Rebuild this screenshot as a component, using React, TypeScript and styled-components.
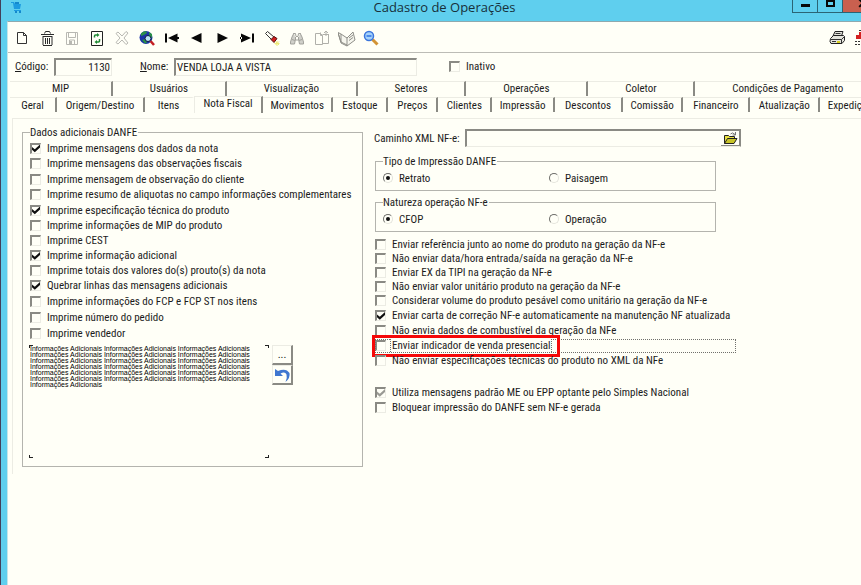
import React from "react";
import styled, { createGlobalStyle, css } from "styled-components";

const paper = "#fffff7";
const sky = "#5fcfee";
const shade = "#8a8a84";
const soft = "#b4b4ae";
const faint = "#ececE4";
const ink = "#1c1c1c";

const GlobalStyle = createGlobalStyle`
  * { box-sizing: border-box; }
  body {
    margin: 0;
    overflow: hidden;
    background: ${paper};
    color: ${ink};
    font: 11px/13px "Roboto Condensed", "Liberation Sans", Roboto, sans-serif;
  }
  button, input, textarea { font: inherit; color: inherit; margin: 0; }
`;

const Window = styled.div`
  width: calc(100% + 27px);
  min-height: 100vh;
  display: flex;
  flex-direction: column;
  background: ${sky};
  border-left: 1px solid #43405a;
  padding-left: 6px;
`;

const TitleBar = styled.header`
  height: 21px;
  display: grid;
  grid-template-columns: 1fr auto 1fr;
  align-items: start;
  padding-right: 6px;
`;

const AppIcon = styled.svg`
  width: 14px;
  height: 14px;
  margin-left: 2px;
`;

const Title = styled.h1`
  margin: 0;
  font: 400 13px/15px "Open Sans", "Noto Sans", sans-serif;
  color: #17303a;
`;

const WindowButtons = styled.div`
  display: flex;
  justify-content: flex-end;
`;

const WindowButton = styled.button<{ $close?: boolean }>`
  width: ${(p) => (p.$close ? 40 : 25)}px;
  height: 13px;
  padding: 0;
  display: flex;
  justify-content: center;
  border: 1px solid #2b6475;
  border-top: 0;
  border-right-width: ${(p) => (p.$close ? 1 : 0)}px;
  background: ${(p) => (p.$close ? "#c9604f" : sky)};
  svg { width: 100%; height: 12px; }
`;

const Client = styled.main`
  flex: 1;
  background: ${paper};
  border-top: 1px solid #8fa9ae;
  border-left: 1px solid #c4e6ea;
`;

const Toolbar = styled.div`
  height: 31px;
  display: flex;
  align-items: center;
  padding: 2px 14px 0 1px;
  border-bottom: 1px solid #bcbcb6;
`;

const ToolButton = styled.button<{ $end?: boolean }>`
  width: 25px;
  height: 24px;
  padding: 0;
  display: flex;
  align-items: center;
  justify-content: center;
  border: 0;
  background: none;
  ${(p) => p.$end && css`margin-left: auto;`}
  svg { width: 18px; height: 18px; }
`;

const IdentityRow = styled.form`
  height: 27px;
  display: flex;
  align-items: center;
  padding-left: 7px;
`;

const FieldLabel = styled.label<{ $width: number; $gap?: number }>`
  width: ${(p) => p.$width}px;
  margin-left: ${(p) => p.$gap ?? 0}px;
  white-space: nowrap;
`;

const TextField = styled.input<{ $width?: number; $right?: boolean }>`
  ${(p) => (p.$width ? css`width: ${p.$width}px;` : css`flex: 1; min-width: 0;`)}
  height: 18px;
  padding: 0 1px;
  border: 1px solid ${faint};
  border-top: 2px solid ${shade};
  border-left: 2px solid ${shade};
  border-radius: 0;
  background: ${paper};
  outline: 0;
  text-align: ${(p) => (p.$right ? "right" : "left")};
`;

const TabRow = styled.div<{ $front?: boolean }>`
  display: flex;
  align-items: center;
  height: ${(p) => (p.$front ? 17 : 16)}px;
  margin: 0 6px 0 2px;
`;

const Tab = styled.button<{ $selected?: boolean; $min?: number; $before?: boolean }>`
  flex: 1 1 auto;
  min-width: ${(p) => p.$min ?? 0}px;
  height: 15px;
  padding: 0 5px;
  border: 0;
  border-top: 1px solid ${faint};
  border-right: 2px solid ${(p) => (p.$before ? "transparent" : shade)};
  background: ${paper};
  text-align: center;
  white-space: nowrap;
  line-height: 13px;
  ${(p) => p.$selected && css`
    height: 17px;
    padding-bottom: 3px;
    border-left: 1px solid ${faint};
  `}
`;

const Panel = styled.section`
  margin: 5px 6px 0 4px;
  padding: 7px 9px;
  border-top: 1px solid ${faint};
  border-left: 1px solid ${faint};
  display: grid;
  grid-template-columns: minmax(0, 341px) minmax(0, 367px);
  column-gap: 11px;
  align-items: start;
`;

const Group = styled.fieldset<{ $roomy?: boolean }>`
  min-width: 0;
  margin: 0;
  padding: ${(p) => (p.$roomy ? "1px 7px 8px" : "0 7px 2px")};
  border: 1px solid ${soft};
`;

const Legend = styled.legend`
  height: 13px;
  padding: 0 1px 0 0;
`;

const Column = styled.div`
  padding-top: 3px;
  display: flex;
  flex-direction: column;
`;

const Choices = styled.div`
  margin: 0 25px 0 1px;
  display: grid;
  gap: 5px;
  padding: 8px 0 5px;
`;

const RadioRow = styled.div`
  height: 20px;
  display: grid;
  grid-template-columns: 166px 1fr;
  align-items: center;
`;

const OptionList = styled.div<{ $apart?: boolean }>`
  padding-left: 1px;
  padding-top: ${(p) => (p.$apart ? 17 : 0)}px;
`;

const Option = styled.label<{ $height?: number }>`
  position: relative;
  width: fit-content;
  height: ${(p) => p.$height ?? 15}px;
  display: flex;
  align-items: center;
  gap: 6px;
  white-space: nowrap;
`;

const Tick = styled.input.attrs({ type: "checkbox" })`
  appearance: none;
  flex: none;
  width: 11px;
  height: 11px;
  border: 1px solid ${faint};
  border-top: 2px solid ${shade};
  border-left: 2px solid ${shade};
  background: ${paper};
  outline: 0;
  &:checked::after {
    content: "";
    display: block;
    width: 8px;
    height: 8px;
    background: #101010;
    clip-path: polygon(0 30%, 35% 60%, 100% 0, 100% 36%, 35% 96%, 0 66%);
  }
  &:disabled::after { background: #9a9a94; }
`;

const Radio = styled.input.attrs({ type: "radio" })`
  appearance: none;
  flex: none;
  width: 10px;
  height: 10px;
  display: grid;
  place-items: center;
  border: 1px solid #e4e4dc;
  border-top-color: #6e6e6a;
  border-left-color: #6e6e6a;
  border-radius: 50%;
  background: ${paper};
  &:checked::after {
    content: "";
    width: 4px;
    height: 4px;
    border-radius: 50%;
    background: #101010;
  }
`;

const FocusOption = styled(Option)`
  width: 361px;
  &::before {
    content: "";
    position: absolute;
    inset: 1px 0 0 0;
    border: 1px dotted #70706c;
  }
`;

const FocusText = styled.span`
  position: relative;
  margin-left: -2px;
  padding: 0 1px;
  border: 1px dotted #70706c;
  border-width: 0 1px;
  background: ${paper};
`;

const RedMark = styled.span`
  position: absolute;
  inset: -3px auto -4px -3px;
  width: 188px;
  border: 3px solid #f50808;
  pointer-events: none;
`;

const Memo = styled.div`
  margin-top: 4px;
  display: flex;
  gap: 3px;
`;

const MemoBox = styled.div`
  position: relative;
  flex: 0 1 239px;
  height: 113px;
`;

const MemoText = styled.textarea`
  display: block;
  width: 100%;
  height: 100%;
  padding: 1px 0 0;
  border: 0;
  resize: none;
  outline: 0;
  overflow: hidden;
  background: transparent;
  color: #000;
  font: 7px/6px "Liberation Sans", sans-serif;
`;

const Corner = styled.i<{ $right?: boolean; $bottom?: boolean }>`
  position: absolute;
  width: 4px;
  height: 3px;
  ${(p) => (p.$right ? "right: 0" : "left: -1px")};
  ${(p) => (p.$bottom ? "bottom: 0" : "top: 0")};
  border: 0 solid #222;
  border-${(p) => (p.$right ? "right" : "left")}-width: 1px;
  border-${(p) => (p.$bottom ? "bottom" : "top")}-width: 1px;
`;

const MemoButtons = styled.div`
  display: flex;
  flex-direction: column;
`;

const RaisedButton = styled.button`
  width: 21px;
  height: 20px;
  padding: 0;
  display: grid;
  place-items: center;
  border: 1px solid ${faint};
  border-right: 2px solid ${shade};
  border-bottom: 2px solid ${shade};
  background: ${paper};
  svg { width: 17px; height: 16px; }
`;

const PathRow = styled.div`
  height: 18px;
  display: flex;
  align-items: center;
`;

const PathBox = styled.div`
  flex: 1;
  display: flex;
  height: 18px;
  border: 1px solid ${faint};
  border-top: 2px solid ${shade};
  border-left: 2px solid ${shade};
  border-right: 1px solid ${shade};
`;

const PathInput = styled.input`
  flex: 1;
  min-width: 0;
  padding: 0 2px;
  border: 0;
  outline: 0;
  background: transparent;
`;

const FolderButton = styled.button`
  width: 19px;
  padding: 0;
  display: grid;
  place-items: center;
  border: 0;
  border-right: 1px solid ${shade};
  border-bottom: 1px solid ${shade};
  background: ${paper};
  svg { width: 15px; height: 14px; }
`;

const Svg = ({ children, box = "0 0 18 18" }: { children: React.ReactNode; box?: string }) => (
  <svg viewBox={box} fill="none" aria-hidden="true">{children}</svg>
);

const gray = "#b8b8b2";

const tools: { name: string; icon: React.ReactNode }[] = [
  { name: "Novo", icon: <path d="M4.5 3.500h6l3 3v8h-9zM10.500 3.500v3h3" stroke="#333" /> },
  {
    name: "Excluir",
    icon: (
      <g stroke="#2c2c2c">
        <path d="M3 5.500h13M6.500 4.500l1-2h4l1 2M4.500 7.500h10" />
        <path d="M5 8v8M14 8v8M5 16.500h9M7.500 9v6M9.500 9v6M11.500 9v6" />
      </g>
    ),
  },
  {
    name: "Salvar",
    icon: (
      <g stroke={gray}>
        <path d="M3.500 3.500h11v12h-11z" />
        <path d="M5.500 3.500v5h7v-5M6.500 15v-4h5v4" />
        <path d="M8 12v3" strokeWidth="2" />
      </g>
    ),
  },
  {
    name: "Atualizar",
    icon: (
      <g>
        <path d="M3.500 2.500h11v14h-11z" stroke="#222" />
        <path d="M6.500 8.500V7q0-1 1-1H9M11.500 10v2q0 1-1 1H9" stroke="#1e8a34" strokeWidth="1.500" />
        <path d="M9 4 11.500 6 9 8zM9 11 6.500 13 9 15z" fill="#1e8a34" />
      </g>
    ),
  },
  {
    name: "Cancelar",
    icon: (
      <path
        d="m3 4.500 2-1.500 4 4 4-4.500 2 1.500-4 5 4 5-2 1.500-4-4.500-4 4-2-1.500 4-4.500z"
        stroke={gray}
      />
    ),
  },
  {
    name: "Localizar",
    icon: (
      <g>
        <circle cx="8" cy="8.500" r="6.500" fill="#1a34a8" />
        <path d="M3 4.500q2-2.500 5-2.500l1 2-3 2-3 1zM11 3l3 2v4l-3-2zM4 11l3-1 2 4-2 .5z" fill="#2a9048" />
        <circle cx="10" cy="9.500" r="3" fill="#b8e4f4" stroke="#0b1744" />
        <path d="m12.500 12 3.500 4" stroke="#c41f24" strokeWidth="2.500" />
      </g>
    ),
  },
  { name: "Primeiro", icon: <path d="M2 4.500h2v9H2zM14.500 4.500v9L5 9z M14 8h2v2h-2z" fill="#080808" /> },
  { name: "Anterior", icon: <path d="M13.500 4v10L3 9z" fill="#080808" /> },
  { name: "Próximo", icon: <path d="M4.500 4v10L15 9z" fill="#080808" /> },
  { name: "Último", icon: <path d="M14 4.500h2v9h-2zM3 4.500v9L13 9zM2 8h2v2H2z" fill="#080808" /> },
  {
    name: "Filtrar",
    icon: (
      <g>
        <path d="m2.500 4.500 2-2L11 8 9 11z" fill={paper} stroke="#333" />
        <path d="M8 10.500 11 7.500l3 2-3 4z" fill="#d11f1f" stroke="#5a1111" />
        <path d="M14 12v5M11.500 14.500h5M12.500 12.500l3.500 3.500M16 12.500 12.500 16" stroke="#ecea76" />
      </g>
    ),
  },
  {
    name: "Procurar",
    icon: (
      <g stroke="#a2a29c">
        <path d="M6 4 4 8l-1.500 5v2h4l1-5M12 4l2 4 1.500 5v2h-4l-1-5" fill="#d0d0ca" />
        <path d="M5.500 4.500h2l.5 3h2l.5-3h2M7.500 8v3h3V8M4 10.500l3 1M11 11.500l3-1" />
      </g>
    ),
  },
  {
    name: "Copiar",
    icon: (
      <g stroke="#b0b0aa">
        <path d="M2.500 4.500h5l2 2v9h-7z" />
        <path d="M9.500 5.500h6v9h-6M7.500 3.500v3h2M11 4l2-2 2 2M13 2v5M11 5.500h5" />
      </g>
    ),
  },
  {
    name: "Manual",
    icon: (
      <g stroke="#8e8e88">
        <path d="M0 3.500 3 5l6 4 6-6 2 8-8 6-6-3z" fill="#f6f6ee" />
        <path d="m0 4 3 9M9 9v8M11 9l4-3M11 11.500l4-3M3 5v8l6 3" />
      </g>
    ),
  },
  {
    name: "Consultar",
    icon: (
      <g>
        <path d="m9.500 10.500 5 5" stroke="#d29335" strokeWidth="3" />
        <circle cx="6" cy="7" r="4.500" fill="#a5d2fb" stroke="#3b75dc" strokeWidth="1.500" />
        <path d="M3.500 7h5" stroke="#4d8bea" strokeWidth="2" />
      </g>
    ),
  },
];

const backTabs = ["MIP", "Usuários", "Visualização", "Setores", "Operações", "Coletor", "Condições de Pagamento"];
const frontTabs: [string, number][] = [
  ["Geral", 47], ["Origem/Destino", 88], ["Itens", 49], ["Nota Fiscal", 69], ["Movimentos", 70],
  ["Estoque", 55], ["Preços", 50], ["Clientes", 54], ["Impressão", 60], ["Descontos", 68],
  ["Comissão", 59], ["Financeiro", 67], ["Atualização", 70], ["Expedição", 60],
];

type Item = { text: string; on?: boolean; height?: number; focus?: boolean; off?: boolean };

const danfe: Item[] = [
  { text: "Imprime mensagens dos dados da nota", on: true, height: 16 },
  { text: "Imprime mensagens das observações fiscais" },
  { text: "Imprime mensagem de observação do cliente", height: 16 },
  { text: "Imprime resumo de aliquotas no campo informações complementares" },
  { text: "Imprime especificação técnica do produto", on: true, height: 16 },
  { text: "Imprime informações de MIP do produto" },
  { text: "Imprime CEST" },
  { text: "Imprime informação adicional", on: true },
  { text: "Imprime totais dos valores do(s) prouto(s) da nota" },
  { text: "Quebrar linhas das mensagens adicionais", on: true },
  { text: "Imprime informações do FCP e FCP ST nos itens", height: 16 },
  { text: "Imprime número do pedido", height: 16 },
  { text: "Imprime vendedor", height: 16 },
];

const sending: Item[] = [
  { text: "Enviar referência junto ao nome do produto na geração da NF-e", height: 14 },
  { text: "Não enviar data/hora entrada/saída na geração da NF-e", height: 14 },
  { text: "Enviar EX da TIPI na geração da NF-e", height: 14 },
  { text: "Não enviar valor unitário produto na geração da NF-e", height: 14 },
  { text: "Considerar volume do produto pesável como unitário na geração da NF-e" },
  { text: "Enviar carta de correção NF-e automaticamente na manutenção NF atualizada", on: true },
  { text: "Não envia dados de combustível da geração da NFe" },
  { text: "Enviar indicador de venda presencial", focus: true },
  { text: "Não enviar especificações técnicas do produto no XML da NFe" },
];

const closing: Item[] = [
  { text: "Utiliza mensagens padrão ME ou EPP optante pelo Simples Nacional", on: true, off: true },
  { text: "Bloquear impressão do DANFE sem NF-e gerada" },
];

const memo = Array(19).fill("Informações Adicionais").join(" ");

const Options = ({ items }: { items: Item[] }) => (
  <>
    {items.map((item) =>
      item.focus ? (
        <FocusOption key={item.text}>
          <Tick />
          <FocusText>{item.text}</FocusText>
          <RedMark />
        </FocusOption>
      ) : (
        <Option key={item.text} $height={item.height}>
          <Tick defaultChecked={item.on} disabled={item.off} />
          {item.text}
        </Option>
      ),
    )}
  </>
);

const RadioGroup = ({ legend, name, options }: { legend: string; name: string; options: string[] }) => (
  <Group>
    <Legend>{legend}</Legend>
    <RadioRow>
      {options.map((option, i) => (
        <Option key={option}>
          <Radio name={name} defaultChecked={i === 0} />
          {option}
        </Option>
      ))}
    </RadioRow>
  </Group>
);

export default function App() {
  return (
    <>
      <GlobalStyle />
      <Window>
        <TitleBar>
          <AppIcon viewBox="0 0 14 14" aria-hidden="true">
            <path d="M2 2h3l1 2h6l-1 5H5L4 3H2zM5 10h7v1H5z" fill="#1c9be0" />
            <path d="M6 2h4v2H6zM6 11h2v2H6zM10 11h2v2h-2z" fill="#1488cc" />
          </AppIcon>
          <Title>Cadastro de Operações</Title>
          <WindowButtons>
            <WindowButton aria-label="Minimizar">
              <Svg box="0 0 24 12"><path d="M8 5.500h9" stroke="#080808" strokeWidth="3" /></Svg>
            </WindowButton>
            <WindowButton aria-label="Maximizar">
              <Svg box="0 0 24 12"><path d="M9 0v6h7V0M9 1h7" stroke="#080808" strokeWidth="2" /></Svg>
            </WindowButton>
            <WindowButton $close aria-label="Fechar">
              <Svg box="0 0 40 12"><path d="m17 7 8-8M25 7l-8-8" stroke="#080808" strokeWidth="2" /></Svg>
            </WindowButton>
          </WindowButtons>
        </TitleBar>
        <Client>
          <Toolbar>
            {tools.map((tool) => (
              <ToolButton key={tool.name} aria-label={tool.name}>
                <Svg>{tool.icon}</Svg>
              </ToolButton>
            ))}
            <ToolButton $end aria-label="Imprimir">
              <Svg>
                <path d="M5 7 7 2.500h8L13.500 7M2.500 9.500l3-3h10l1 1v4l-2.500 3H3l-1-2z" fill="#e4e4dc" stroke="#222" />
                <path d="M7.500 4.500h5M3 10.500h10.500v4M13.500 10.500l3-3M4 12.500h4" stroke="#333" />
                <path d="M9 12h3v2H9z" fill="#d8d020" />
              </Svg>
            </ToolButton>
            <ToolButton aria-label="Sair">
              <Svg>
                <path d="M3 6h3V3h7v11H8v-4H3z" fill="#d42020" />
                <path d="M2 12.500h6M2 15.500h7" stroke="#333" strokeDasharray="2 1" />
                <path d="M6 1.500h9v14H9" stroke="#333" />
              </Svg>
            </ToolButton>
          </Toolbar>

          <IdentityRow>
            <FieldLabel htmlFor="codigo" $width={39}><u>C</u>ódigo:</FieldLabel>
            <TextField id="codigo" $width={58} $right defaultValue="1130" />
            <FieldLabel htmlFor="nome" $width={34} $gap={28}><u>N</u>ome:</FieldLabel>
            <TextField id="nome" $width={243} defaultValue="VENDA LOJA A VISTA" />
            <FieldLabel $width={60} $gap={32}>
              <Option as="span"><Tick />Inativo</Option>
            </FieldLabel>
          </IdentityRow>

          <nav>
            <TabRow>
              {backTabs.map((tab, i) => (
                <Tab key={tab} $min={i === 0 ? 103 : undefined}>{tab}</Tab>
              ))}
            </TabRow>
            <TabRow $front>
              {frontTabs.map(([tab, min]) => (
                <Tab key={tab} $min={min} $selected={tab === "Nota Fiscal"} $before={tab === "Itens"}>{tab}</Tab>
              ))}
            </TabRow>
          </nav>

          <Panel>
            <Group $roomy>
              <Legend>Dados adicionais DANFE</Legend>
              <Options items={danfe} />
              <Memo>
                <MemoBox>
                  <MemoText aria-label="Informações Adicionais" spellCheck={false} defaultValue={memo} />
                  <Corner />
                  <Corner $right />
                  <Corner $bottom />
                  <Corner $right $bottom />
                </MemoBox>
                <MemoButtons>
                  <RaisedButton>...</RaisedButton>
                  <RaisedButton aria-label="Desfazer">
                    <Svg box="0 0 17 16">
                      <path d="M1 2v7h8L6.500 6.500Q11 4 12.500 7.500 13.500 11 11.500 15 16.500 11 15.500 6 12 .5 4 4z" fill="#3f76d0" />
                    </Svg>
                  </RaisedButton>
                </MemoButtons>
              </Memo>
            </Group>

            <Column>
              <PathRow>
                <FieldLabel htmlFor="caminho" $width={91}>Caminho XML NF-e:</FieldLabel>
                <PathBox>
                  <PathInput id="caminho" />
                  <FolderButton aria-label="Abrir">
                    <Svg box="0 0 15 14">
                      <path d="M1.500 12.500v-8h4l1 1h5v2" fill="#e8e040" stroke="#222" />
                      <path d="m1.500 12.500 3-5h9.500l-3 5z" fill="#c8c428" stroke="#222" />
                      <path d="M7.500 3Q9.500.5 12 3.500M12.500 1v3h-3" stroke="#777" />
                    </Svg>
                  </FolderButton>
                </PathBox>
              </PathRow>
              <Choices>
                <RadioGroup legend="Tipo de Impressão DANFE" name="tipo" options={["Retrato", "Paisagem"]} />
                <RadioGroup legend="Natureza operação NF-e" name="natureza" options={["CFOP", "Operação"]} />
              </Choices>
              <OptionList><Options items={sending} /></OptionList>
              <OptionList $apart><Options items={closing} /></OptionList>
            </Column>
          </Panel>
        </Client>
      </Window>
    </>
  );
}
